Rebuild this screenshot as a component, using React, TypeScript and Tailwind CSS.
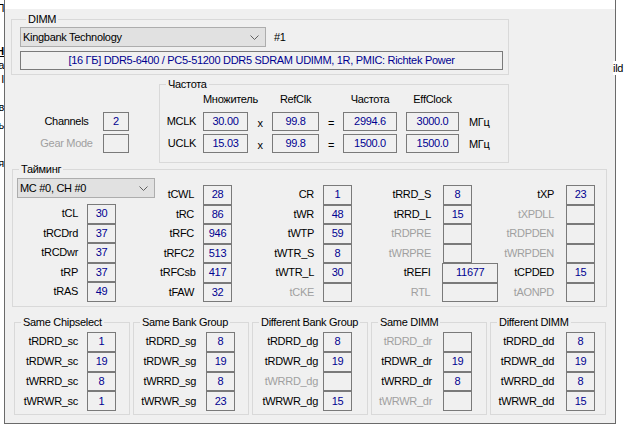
import React from 'react';

type Cell = { l: string; v?: string; d?: boolean; wide?: boolean };

const Chevron = () => (
  <svg width="9" height="5" viewBox="0 0 9 5" className="shrink-0">
    <polyline points="0.5,0.5 4.5,4.5 8.5,0.5" fill="none" stroke="#606060" strokeWidth="1" />
  </svg>
);

const Val = ({ v, cls }: { v?: string; cls: string }) => (
  <div className={`flex items-center justify-center border border-[#7a7a7a] bg-[#f0f0f0] text-[#000090] leading-none ${cls}`}>
    {v}
  </div>
);

const Row = ({ c, lw, gap, h }: { c: Cell; lw: string; gap: string; h: string }) => (
  <div className={`flex items-center ${h}`}>
    <div className={`text-right whitespace-nowrap leading-none ${lw} ${c.d ? 'text-[#a0a0a0]' : 'text-black'}`}>{c.l}</div>
    <Val v={c.v} cls={`h-full ${gap} ${c.wide ? 'w-[56px]' : 'w-[29px]'}`} />
  </div>
);

const col2: Cell[] = [
  { l: 'tCWL', v: '28' }, { l: 'tRC', v: '86' }, { l: 'tRFC', v: '946' },
  { l: 'tRFC2', v: '513' }, { l: 'tRFCsb', v: '417' }, { l: 'tFAW', v: '32' },
];
const col1: Cell[] = [
  { l: 'tCL', v: '30' }, { l: 'tRCDrd', v: '37' }, { l: 'tRCDwr', v: '37' },
  { l: 'tRP', v: '37' }, { l: 'tRAS', v: '49' },
];
const col3: Cell[] = [
  { l: 'CR', v: '1' }, { l: 'tWR', v: '48' }, { l: 'tWTP', v: '59' },
  { l: 'tWTR_S', v: '8' }, { l: 'tWTR_L', v: '30' }, { l: 'tCKE', d: true },
];
const col4: Cell[] = [
  { l: 'tRRD_S', v: '8' }, { l: 'tRRD_L', v: '15' }, { l: 'tRDPRE', d: true },
  { l: 'tWRPRE', d: true }, { l: 'tREFI', v: '11677', wide: true }, { l: 'RTL', d: true, wide: true },
];
const col5: Cell[] = [
  { l: 'tXP', v: '23' }, { l: 'tXPDLL', d: true }, { l: 'tRDPDEN', d: true },
  { l: 'tWRPDEN', d: true }, { l: 'tCPDED', v: '15' }, { l: 'tAONPD', d: true },
];

const groups: { t: string; lw: string; gap: string; rows: Cell[] }[] = [
  { t: 'Same Chipselect', lw: 'w-[63px]', gap: 'ml-[9px]', rows: [
    { l: 'tRDRD_sc', v: '1' }, { l: 'tRDWR_sc', v: '19' }, { l: 'tWRRD_sc', v: '8' }, { l: 'tWRWR_sc', v: '1' }] },
  { t: 'Same Bank Group', lw: 'w-[62px]', gap: 'ml-[10px]', rows: [
    { l: 'tRDRD_sg', v: '8' }, { l: 'tRDWR_sg', v: '19' }, { l: 'tWRRD_sg', v: '8' }, { l: 'tWRWR_sg', v: '23' }] },
  { t: 'Different Bank Group', lw: 'w-[65px]', gap: 'ml-[5px]', rows: [
    { l: 'tRDRD_dg', v: '8' }, { l: 'tRDWR_dg', v: '19' }, { l: 'tWRRD_dg', d: true }, { l: 'tWRWR_dg', v: '15' }] },
  { t: 'Same DIMM', lw: 'w-[60px]', gap: 'ml-[11px]', rows: [
    { l: 'tRDRD_dr', d: true }, { l: 'tRDWR_dr', v: '19' }, { l: 'tWRRD_dr', v: '8' }, { l: 'tWRWR_dr', d: true }] },
  { t: 'Different DIMM', lw: 'w-[63px]', gap: 'ml-[12px]', rows: [
    { l: 'tRDRD_dd', v: '8' }, { l: 'tRDWR_dd', v: '19' }, { l: 'tWRRD_dd', v: '8' }, { l: 'tWRWR_dd', v: '15' }] },
];

const freq = [
  { n: 'MCLK', m: '30.00', r: '99.8', f: '2994.6', e: '3000.0' },
  { n: 'UCLK', m: '15.03', r: '99.8', f: '1500.0', e: '1500.0' },
];

// glyphs of the window behind, cut at its right edge
const Cut = ({ ch, cls }: { ch: string; cls: string }) => (
  <div className={`flex justify-end overflow-hidden w-[4px] h-[14px] leading-[14px] ${cls}`}>
    <span className="shrink-0">{ch}</span>
  </div>
);

export default function App() {
  return (
    <div className="flex w-[627px] h-[430px] bg-white overflow-hidden text-[11px] tracking-[-0.3px] text-black font-['Liberation_Sans',Arial,sans-serif]">
      <div className="w-[4px] shrink-0 flex flex-col">
        <Cut ch="П" cls="mt-[1px]" />
        <Cut ch="Н" cls="mt-[29px] font-bold underline" />
        <Cut ch="а" cls="mt-[0px]" />
        <Cut ch="I" cls="mt-[0px]" />
        <Cut ch="в" cls="mt-[14px]" />
        <Cut ch="ь" cls="mt-[4px]" />
        <Cut ch="я" cls="mt-[24px]" />
      </div>

      <div className="w-[612px] h-[424px] shrink-0 flex flex-col border-x border-b border-[#6a6a6a]">
        <div className="h-[9px] bg-white" />
        <div className="flex-1 bg-[#f0f0f0] flex flex-col">
          {/* DIMM */}
          <fieldset className="ml-[6px] mt-[3px] w-[498px] border border-[#d9d9d9] pl-[8px] pb-[4px]">
            <legend className="ml-[6px] px-[2px] leading-[14px]">DIMM</legend>
            <div className="flex items-center mt-[1px]">
              <div className="w-[246px] h-[20px] flex items-center justify-between border border-[#adadad] bg-[#e1e1e1] pl-[2px] pr-[6px]">
                <span>Kingbank Technology</span>
                <Chevron />
              </div>
              <span className="ml-[8px]">#1</span>
            </div>
            <div className="mt-[4px] w-[483px] h-[19px] flex items-center justify-center border border-[#7a7a7a] bg-[#f0f0f0] text-[#000090]">
              [16 ГБ] DDR5-6400 / PC5-51200 DDR5 SDRAM UDIMM, 1R, PMIC: Richtek Power
            </div>
          </fieldset>

          {/* Channels + frequency */}
          <div className="flex ml-[6px]">
            <div className="w-[148px] mt-[37px] pl-[19px] flex flex-col gap-[3px]">
              <div className="flex items-center h-[19px]">
                <div className="w-[73px] text-center">Channels</div>
                <Val v="2" cls="w-[26px] h-full" />
              </div>
              <div className="flex items-center h-[19px]">
                <div className="w-[73px] text-center text-[#a0a0a0]">Gear Mode</div>
                <Val cls="w-[26px] h-full" />
              </div>
            </div>
            <fieldset className="mt-[2px] w-[350px] border border-[#d9d9d9] pb-[9px]">
              <legend className="ml-[6px] px-[2px] leading-[14px]">Частота</legend>
              <div className="flex items-center h-[14px] mt-[1px] pl-[43px]">
                <div className="w-[45px] text-center whitespace-nowrap">Множитель</div>
                <div className="w-[24px]" />
                <div className="w-[47px] text-center">RefClk</div>
                <div className="w-[24px]" />
                <div className="w-[54px] text-center">Частота</div>
                <div className="w-[9px]" />
                <div className="w-[53px] text-center">EffClock</div>
              </div>
              {freq.map((r, i) => (
                <div key={r.n} className={`flex items-center h-[19px] ${i === 0 ? 'mt-[6px]' : 'mt-[3px]'}`}>
                  <div className="w-[43px] pr-[7px] text-right">{r.n}</div>
                  <Val v={r.m} cls="w-[45px] h-full" />
                  <div className="w-[24px] text-center pt-[3px]">x</div>
                  <Val v={r.r} cls="w-[47px] h-full" />
                  <div className="w-[24px] text-center pt-[3px]">=</div>
                  <Val v={r.f} cls="w-[54px] h-full" />
                  <div className="w-[9px]" />
                  <Val v={r.e} cls="w-[53px] h-full" />
                  <div className="ml-[10px] pt-[2px]">МГц</div>
                </div>
              ))}
            </fieldset>
          </div>

          {/* Timings */}
          <fieldset className="ml-[7px] w-[595px] border border-[#d9d9d9] pb-[4px]">
            <legend className="ml-[6px] px-[2px] leading-[13px]">Тайминг</legend>
            <div className="flex">
              <div className="ml-[4px] w-[143px] flex flex-col">
                <div className="mt-[2px] w-[138px] h-[20px] flex items-center justify-between border border-[#adadad] bg-[#e1e1e1] pl-[2px] pr-[6px]">
                  <span>MC #0, CH #0</span>
                  <Chevron />
                </div>
                <div className="mt-[6px] flex flex-col">
                  {col1.map(c => <Row key={c.l} c={c} lw="w-[61px]" gap="ml-[9px]" h="h-[19.5px]" />)}
                </div>
              </div>
              <div className="mt-[9px] flex flex-col">
                {col2.map(c => <Row key={c.l} c={c} lw="w-[34px]" gap="ml-[9px]" h="h-[19.5px]" />)}
              </div>
              <div className="mt-[9px] flex flex-col">
                {col3.map(c => <Row key={c.l} c={c} lw="w-[82px]" gap="ml-[9px]" h="h-[19.5px]" />)}
              </div>
              <div className="mt-[9px] w-[146px] flex flex-col">
                {col4.map(c => <Row key={c.l} c={c} lw="w-[79px]" gap="ml-[12px]" h="h-[19.5px]" />)}
              </div>
              <div className="mt-[9px] flex flex-col">
                {col5.map(c => <Row key={c.l} c={c} lw="w-[56px]" gap="ml-[12px]" h="h-[19.5px]" />)}
              </div>
            </div>
          </fieldset>

          {/* Turnaround groups */}
          <div className="flex gap-[3px] ml-[9px] mt-[8px]">
            {groups.map(g => (
              <fieldset key={g.t} className="w-[116px] border border-[#d9d9d9] pb-[3px]">
                <legend className="ml-[6px] px-[2px] leading-[14px] whitespace-nowrap">{g.t}</legend>
                <div className="mt-[3px] flex flex-col">
                  {g.rows.map(c => <Row key={c.l} c={c} lw={g.lw} gap={g.gap} h="h-[19.75px]" />)}
                </div>
              </fieldset>
            ))}
          </div>
        </div>
      </div>

      <div className="flex-1 relative">
        <div className="relative -ml-[3px] mt-[61px] leading-[14px] bg-white w-max">ild</div>
      </div>
    </div>
  );
}
